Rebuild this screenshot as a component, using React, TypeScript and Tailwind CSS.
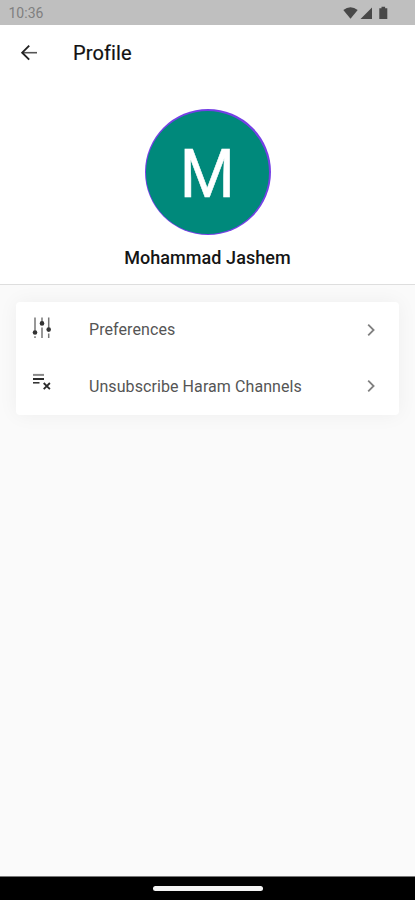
import type { FC, ReactNode } from 'react';

interface MenuRowProps {
  icon: ReactNode;
  label: string;
}

const StatusBar: FC = () => (
  <div className="flex h-[25px] shrink-0 items-center justify-between bg-[#bfbfbf] pl-[8.5px] pr-[26px]">
    <span className="text-[14px] leading-none text-[#808080]">10:36</span>
    <svg width="46" height="14" viewBox="0 0 46 14" fill="#484848">
      {/* wifi */}
      <path d="M0.3 4 Q7.5 -1.5 14.7 4 L7.5 12.8 Z" />
      {/* signal */}
      <path d="M29 1.5 V13 H17.5 Z" />
      {/* battery */}
      <path d="M38.5 0.8 h3.6 v1.4 h2.2 V13 h-8 V2.2 h2.2 Z" />
    </svg>
  </div>
);

const SlidersIcon: FC = () => (
  <svg width="24" height="26" viewBox="0 0 24 26" fill="#333333">
    <g stroke="#777777" strokeWidth="1.5">
      <path d="M5 2.5 V18 M5 21.2 V23" />
      <path d="M12 2.5 V9 M12 12.5 V23" />
      <path d="M18.7 2.5 V15 M18.7 18.5 V23" />
    </g>
    <circle cx="5" cy="17.5" r="2.3" />
    <circle cx="12" cy="8.4" r="2.3" />
    <circle cx="18.7" cy="14.6" r="2.3" />
  </svg>
);

const ListRemoveIcon: FC = () => (
  <svg width="24" height="26" viewBox="0 0 24 26" fill="none" stroke="#2b2b2b">
    <path d="M3 2.9 H14" stroke="#888888" strokeWidth="2" />
    <path d="M3 7 H14" strokeWidth="2" />
    <path d="M3 10.8 H9.5" strokeWidth="1.5" />
    <path d="M13.7 11 L19.9 17.2 M19.9 11 L13.7 17.2" strokeWidth="1.8" />
  </svg>
);

const MenuRow: FC<MenuRowProps> = ({ icon, label }) => (
  <div className="flex h-[56.5px] items-center pl-3.5 pr-[22px]">
    <span className="w-[59px] shrink-0 pb-1">{icon}</span>
    <span className="text-[16px] leading-none tracking-[0.08px] text-[#555555]">{label}</span>
    <svg className="mb-px ml-auto" width="12" height="16" viewBox="0 0 12 16" fill="none">
      <path d="M3.2 2.6 L8.6 8 L3.2 13.4" stroke="#808080" strokeWidth="1.8" />
    </svg>
  </div>
);

const App: FC = () => (
  <div className="flex h-[900px] w-[415px] flex-col overflow-hidden bg-[#fafafa] font-[Roboto,sans-serif]">
    <StatusBar />
    <div className="h-[260px] shrink-0 border-b border-[#dedede] bg-white">
      <header className="flex h-14 items-center pl-[20px]">
        <svg width="18" height="18" viewBox="0 0 18 18" fill="none" stroke="#222222">
          <path d="M17 8.7 H2.5" stroke="#555555" strokeWidth="1.6" />
          <path d="M9.2 1.7 L2.2 8.7 L9.2 15.7" strokeWidth="1.9" />
        </svg>
        <h1 className="pl-[35px] text-[20px] leading-none tracking-[0.1px] text-[#111111] [-webkit-text-stroke:0.2px_#111111]">
          Profile
        </h1>
      </header>
      <div className="flex flex-col items-center pt-[28px]">
        <div className="flex h-[126px] w-[126px] items-center justify-center rounded-full bg-[#7440e5] p-[1.5px]">
          <div className="flex h-full w-full items-center justify-center rounded-full bg-[#00897b]">
            <span className="scale-x-[0.94] pt-[4px] text-[67px] leading-none text-white [-webkit-text-stroke:0.6px_white]">
              M
            </span>
          </div>
        </div>
        <h2 className="pt-[13px] text-[18px] font-medium leading-[20px] tracking-[0.07px] text-[#151515]">
          Mohammad Jashem
        </h2>
      </div>
    </div>
    <main className="flex-1 px-4 pt-[17px]">
      <div className="h-[113px] rounded-[4px] bg-white shadow-[0_0_20px_rgba(0,0,0,0.05)]">
        <MenuRow icon={<SlidersIcon />} label="Preferences" />
        <MenuRow icon={<ListRemoveIcon />} label="Unsubscribe Haram Channels" />
      </div>
    </main>
    <nav className="flex h-6 shrink-0 items-center justify-center border-t border-[#777777] bg-black">
      <div className="h-[5px] w-[110px] rounded-full bg-[#f4f4f4]" />
    </nav>
  </div>
);

export default App;
